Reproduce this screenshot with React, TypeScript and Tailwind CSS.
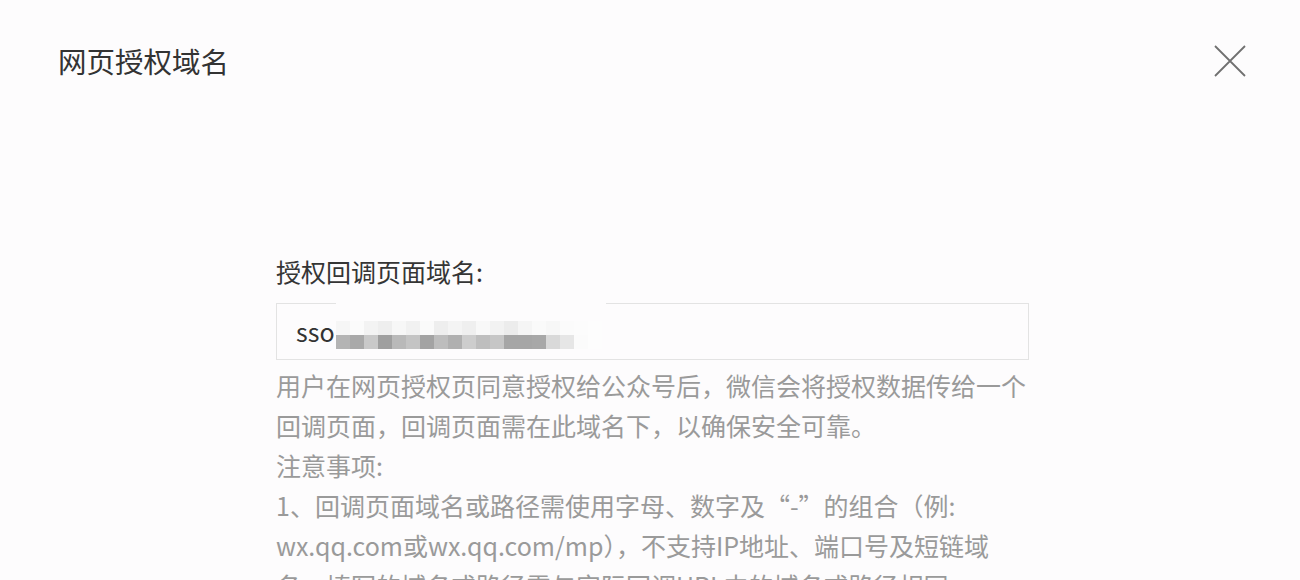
import React from "react";

const mosaicTop = ["#f6f6f6", "#fbfbfb", "#f3f3f3", "#eeeeee", "#f7f7f7", "#f1f1f1", "#fafafa", "#eeeeee", "#f4f4f4", "#efefef", "#f8f8f8", "#f2f2f2", "#ececec", "#f5f5f5", "#fafafa", "#f7f7f7", "#fbfbfb", "#fcfcfc", "#fdfdfd"];
const mosaicRow = ["#b4b4b4", "#a9a9a9", "#c9c9c9", "#9f9f9f", "#b9b9b9", "#c4c4c4", "#a3a3a3", "#bdbdbd", "#b0b0b0", "#cdcdcd", "#bebebe", "#c6c6c6", "#a6a6a6", "#a6a6a6", "#a8a8a8", "#d9d9d9", "#e6e6e6", "#fbfbfb", "#fdfdfd"];

const lines = [
  "用户在网页授权页同意授权给公众号后，微信会将授权数据传给一个",
  "回调页面，回调页面需在此域名下，以确保安全可靠。",
  "注意事项:",
  "1、回调页面域名或路径需使用字母、数字及“-”的组合（例:",
  "wx.qq.com或wx.qq.com/mp），不支持IP地址、端口号及短链域",
  "名，填写的域名或路径需与实际回调URL中的域名或路径相同",
];

export default function App() {
  return (
    <div
      className="w-[1300px] h-[580px] overflow-hidden bg-[#fdfcfd]"
      style={{ fontFamily: '"Noto Sans CJK SC", "Noto Sans", sans-serif' }}
    >
      {/* header */}
      <div className="flex items-center justify-between pl-[58px] pr-[54px] pt-[41px]">
        <h1 className="text-[28.5px] leading-[40px] text-[#333]">网页授权域名</h1>
        <button className="w-8 h-8 text-[#707070]">
          <svg viewBox="0 0 32 32" className="w-8 h-8" fill="none" stroke="currentColor" strokeWidth="1.8">
            <path d="M1 1 L31 31 M31 1 L1 31" />
          </svg>
        </button>
      </div>

      {/* form */}
      <div className="pl-[276px] pt-[170px]">
        <div className="text-[25px] leading-[40px] text-[#353535]">授权回调页面域名:</div>
        <div className="relative mt-3 w-[753px] h-[57px] border border-[#e3e3e3] bg-[#fdfcfd] flex items-center pl-[19px]">
          <span className="text-[25px] text-[#333]">sso</span>
          {/* blurred value */}
          <div className="absolute left-[59px] top-[-2px] w-[270px] h-[52px] bg-[#fdfcfd] flex flex-col justify-end">
            <div className="flex h-[14px]">
              {mosaicTop.map((c, i) => (
                <div key={i} className="w-[14px] h-full" style={{ background: c }} />
              ))}
            </div>
            <div className="flex h-[14px] mb-[5px]">
              {mosaicRow.map((c, i) => (
                <div key={i} className="w-[14px] h-full" style={{ background: c }} />
              ))}
            </div>
          </div>
        </div>
        <div className="mt-[5px] text-[25px] leading-[40px] text-[#9a9a9a] whitespace-nowrap">
          {lines.map((l, i) => (
            <div key={i}>{l}</div>
          ))}
        </div>
      </div>
    </div>
  );
}
